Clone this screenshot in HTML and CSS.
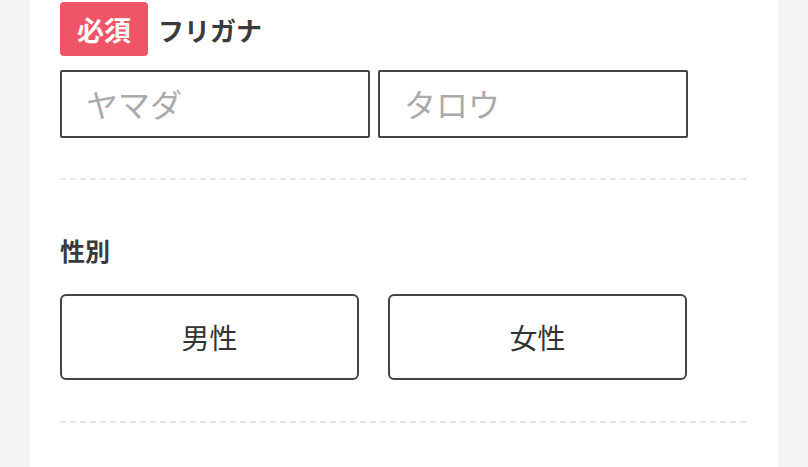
FILE: index.html
```html
<!DOCTYPE html>
<html lang="ja">
<head>
    <meta charset="UTF-8">
    <meta name="viewport" content="width=device-width, initial-scale=1.0">
    <title>フォーム</title>
    <link rel="stylesheet" href="styles.css">
</head>
<body>
    <div class="form-card">
        <div class="form-section">
            <div class="field-head">
                <span class="required-badge">必須</span>
                <span class="field-label">フリガナ</span>
            </div>
            <div class="name-row">
                <input class="text-input" type="text" placeholder="ヤマダ">
                <input class="text-input" type="text" placeholder="タロウ">
            </div>
        </div>
        <div class="divider"></div>
        <div class="form-section gender-section">
            <div class="field-label plain">性別</div>
            <div class="choice-row">
                <button class="choice-button" type="button">男性</button>
                <button class="choice-button" type="button">女性</button>
            </div>
        </div>
        <div class="divider"></div>
    </div>
</body>
</html>
```

FILE: styles.css
```css
body {
    margin: 0;
    background-color: #f4f4f4;
    font-family: "Noto Sans CJK JP", "Noto Sans", sans-serif;
    color: #333;
}

.form-card {
    width: 688px;
    min-height: 467px;
    margin-left: 30px;
    padding: 2px 30px 0;
    background-color: #fff;
    box-sizing: content-box;
}

.form-section {
    padding-bottom: 40px;
}

.field-head {
    display: flex;
    align-items: center;
    gap: 10px;
    height: 54px;
    margin-bottom: 14px;
}

.required-badge {
    display: flex;
    align-items: center;
    justify-content: center;
    width: 88px;
    height: 54px;
    border-radius: 4px;
    background-color: #ef5567;
    color: #fff;
    font-size: 27px;
    font-weight: 700;
}

.field-label {
    font-size: 26px;
    font-weight: 700;
    color: #3a3a3a;
}

.field-label.plain {
    font-size: 25px;
    line-height: 36px;
    margin-bottom: 26px;
}

.name-row {
    display: flex;
    gap: 8px;
}

.text-input {
    width: 310px;
    height: 68px;
    box-sizing: border-box;
    padding: 0 0 2px 24px;
    border: 2px solid #444;
    border-radius: 2px;
    font-family: inherit;
    font-size: 32px;
    color: #333;
    outline: none;
}

.text-input::placeholder {
    color: #aaa;
}

.divider {
    height: 2px;
    background: repeating-linear-gradient(90deg, #e4e7eb 0 6px, transparent 6px 10px);
}

.gender-section {
    padding-top: 52px;
    padding-bottom: 41px;
}

.choice-row {
    display: flex;
    gap: 29px;
}

.choice-button {
    width: 299px;
    height: 86px;
    border: 2px solid #444;
    border-radius: 6px;
    background-color: #fff;
    font-family: inherit;
    font-size: 28px;
    color: #333;
    cursor: pointer;
}
```
